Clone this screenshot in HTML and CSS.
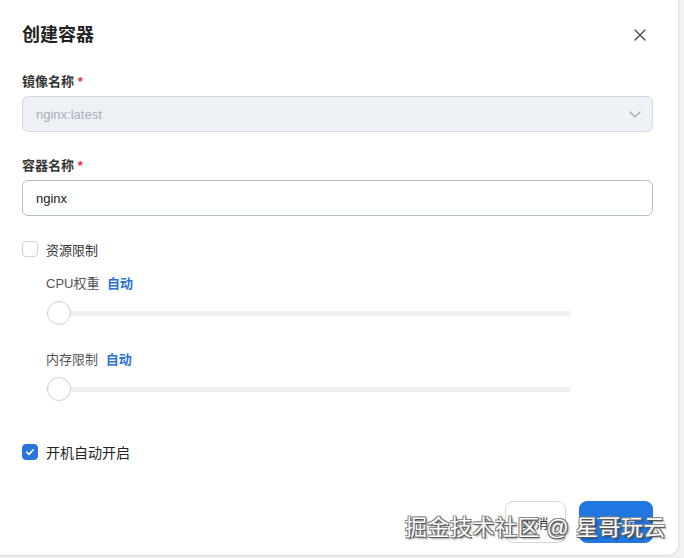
FILE: index.html
```html
<!DOCTYPE html>
<html lang="zh">
<head>
<meta charset="utf-8">
<title>创建容器</title>
<link rel="stylesheet" href="styles.css">
</head>
<body>
<div class="dialog">
  <div class="header">
    <h1 class="title">创建容器</h1>
    <button class="close" aria-label="关闭">
      <svg width="12" height="12" viewBox="0 0 12 12"><path d="M1 1L11 11M11 1L1 11" stroke="#555" stroke-width="1.5" stroke-linecap="round"/></svg>
    </button>
  </div>

  <div class="field field-first">
    <label class="label">镜像名称 <span class="req">*</span></label>
    <div class="select">
      <span>nginx:latest</span>
      <svg width="14" height="14" viewBox="0 0 14 14"><path d="M2 5l5 5 5-5" fill="none" stroke="#a9b0ba" stroke-width="1.6" stroke-linecap="round" stroke-linejoin="round"/></svg>
    </div>
  </div>

  <div class="field">
    <label class="label">容器名称 <span class="req">*</span></label>
    <div class="input">nginx</div>
  </div>

  <div class="check-row check-res">
    <span class="checkbox"></span>
    <span class="check-text">资源限制</span>
  </div>

  <div class="sub">
    <div class="sub-label">CPU权重 <span class="auto">自动</span></div>
    <div class="slider"><span class="track"></span><span class="thumb"></span></div>
    <div class="sub-label sub-label-2">内存限制 <span class="auto">自动</span></div>
    <div class="slider"><span class="track"></span><span class="thumb"></span></div>
  </div>

  <div class="check-row check-boot">
    <span class="checkbox checked">
      <svg width="10" height="10" viewBox="0 0 10 10"><path d="M1.8 5.2l2.2 2.2 4.2-4.6" fill="none" stroke="#fff" stroke-width="1.6" stroke-linecap="round" stroke-linejoin="round"/></svg>
    </span>
    <span class="check-text check-text-lg">开机自动开启</span>
  </div>

  <div class="footer">
    <button class="btn btn-cancel">取消</button>
    <button class="btn btn-primary">下一步</button>
  </div>

  <div class="watermark">掘金技术社区 @ 星哥玩云</div>
</div>
</body>
</html>
```

FILE: styles.css
```css
* { box-sizing: border-box; }
html, body { margin: 0; padding: 0; }
body {
  background: #f1f2f4;
  font-family: "Liberation Sans", "Noto Sans CJK SC", sans-serif;
  color: #333;
  width: 684px;
  height: 558px;
  overflow: hidden;
}
.dialog {
  position: relative;
  width: 678px;
  height: 555px;
  background: #fff;
  border-radius: 0 0 10px 0;
  box-shadow: 0 0 3px rgba(0,0,0,0.18);
  padding: 0 25px 0 22px;
  display: flex;
  flex-direction: column;
}
.header {
  display: flex;
  justify-content: space-between;
  align-items: center;
  margin-top: 23px;
  height: 24px;
}
.title {
  margin: 0;
  font-size: 18px;
  font-weight: 700;
  color: #222;
  line-height: 24px;
}
.close {
  border: 0;
  background: none;
  padding: 0;
  margin-right: 7px;
  width: 12px;
  height: 12px;
  display: flex;
}
.field { display: flex; flex-direction: column; margin-top: 24px; }
.field-first { margin-top: 25px; }
.label {
  font-size: 13px;
  font-weight: 700;
  color: #333;
  line-height: 20px;
  margin-bottom: 4px;
}
.req { color: #e0334a; font-weight: 700; }
.select, .input {
  height: 36px;
  border-radius: 6px;
  display: flex;
  align-items: center;
  justify-content: space-between;
  padding: 0 10px 0 13px;
  font-size: 13px;
}
.select {
  background: #eef1f6;
  border: 1px solid #d4dae2;
  color: #a6adb8;
}
.input {
  background: #fff;
  border: 1px solid #b6bec8;
  color: #222;
}
.check-row {
  display: flex;
  align-items: center;
  height: 20px;
}
.check-res { margin-top: 23px; }
.check-boot { margin-top: 40px; }
.checkbox {
  width: 16px;
  height: 16px;
  border: 1px solid #cfd3d8;
  border-radius: 4px;
  background: #fff;
  display: flex;
  align-items: center;
  justify-content: center;
}
.checkbox.checked {
  background: #2a74de;
  border-color: #2a74de;
}
.check-text {
  margin-left: 8px;
  font-size: 13px;
  color: #333;
}
.check-text-lg { font-size: 14px; color: #222; }
.sub { padding-left: 24px; display: flex; flex-direction: column; }
.sub-label {
  margin-top: 15px;
  font-size: 13px;
  color: #555;
  line-height: 20px;
}
.sub-label-2 { margin-top: 24px; }
.auto { color: #2a72d6; font-weight: 700; margin-left: 4px; }
.slider {
  position: relative;
  margin-top: 7px;
  width: 525px;
  height: 25px;
  display: flex;
  align-items: center;
}
.track {
  width: 100%;
  height: 5px;
  background: #f1f1f2;
  border-radius: 3px;
}
.thumb {
  position: absolute;
  left: 1px;
  top: 0;
  width: 24px;
  height: 24px;
  border-radius: 50%;
  background: #fff;
  border: 1px solid #cfcfcf;
}
.footer {
  display: flex;
  justify-content: flex-end;
  gap: 13px;
  margin-top: 39px;
}
.btn {
  height: 42px;
  border-radius: 8px;
  font-size: 13px;
  font-family: inherit;
  padding: 0;
}
.btn-cancel {
  width: 61px;
  background: #fff;
  border: 1px solid #d6d6d6;
  color: #333;
}
.btn-primary {
  width: 74px;
  background: #2176e0;
  border: 1px solid #2176e0;
  color: #fff;
}
.watermark {
  position: absolute;
  right: 12px;
  bottom: 14px;
  font-size: 22px;
  color: #fff;
  letter-spacing: 0.5px;
  text-shadow: 1px 1px 0 #555, -1px -1px 0 #888, 1px -1px 0 #777, -1px 1px 0 #777, 2px 2px 2px rgba(0,0,0,0.4);
  white-space: nowrap;
}
```
